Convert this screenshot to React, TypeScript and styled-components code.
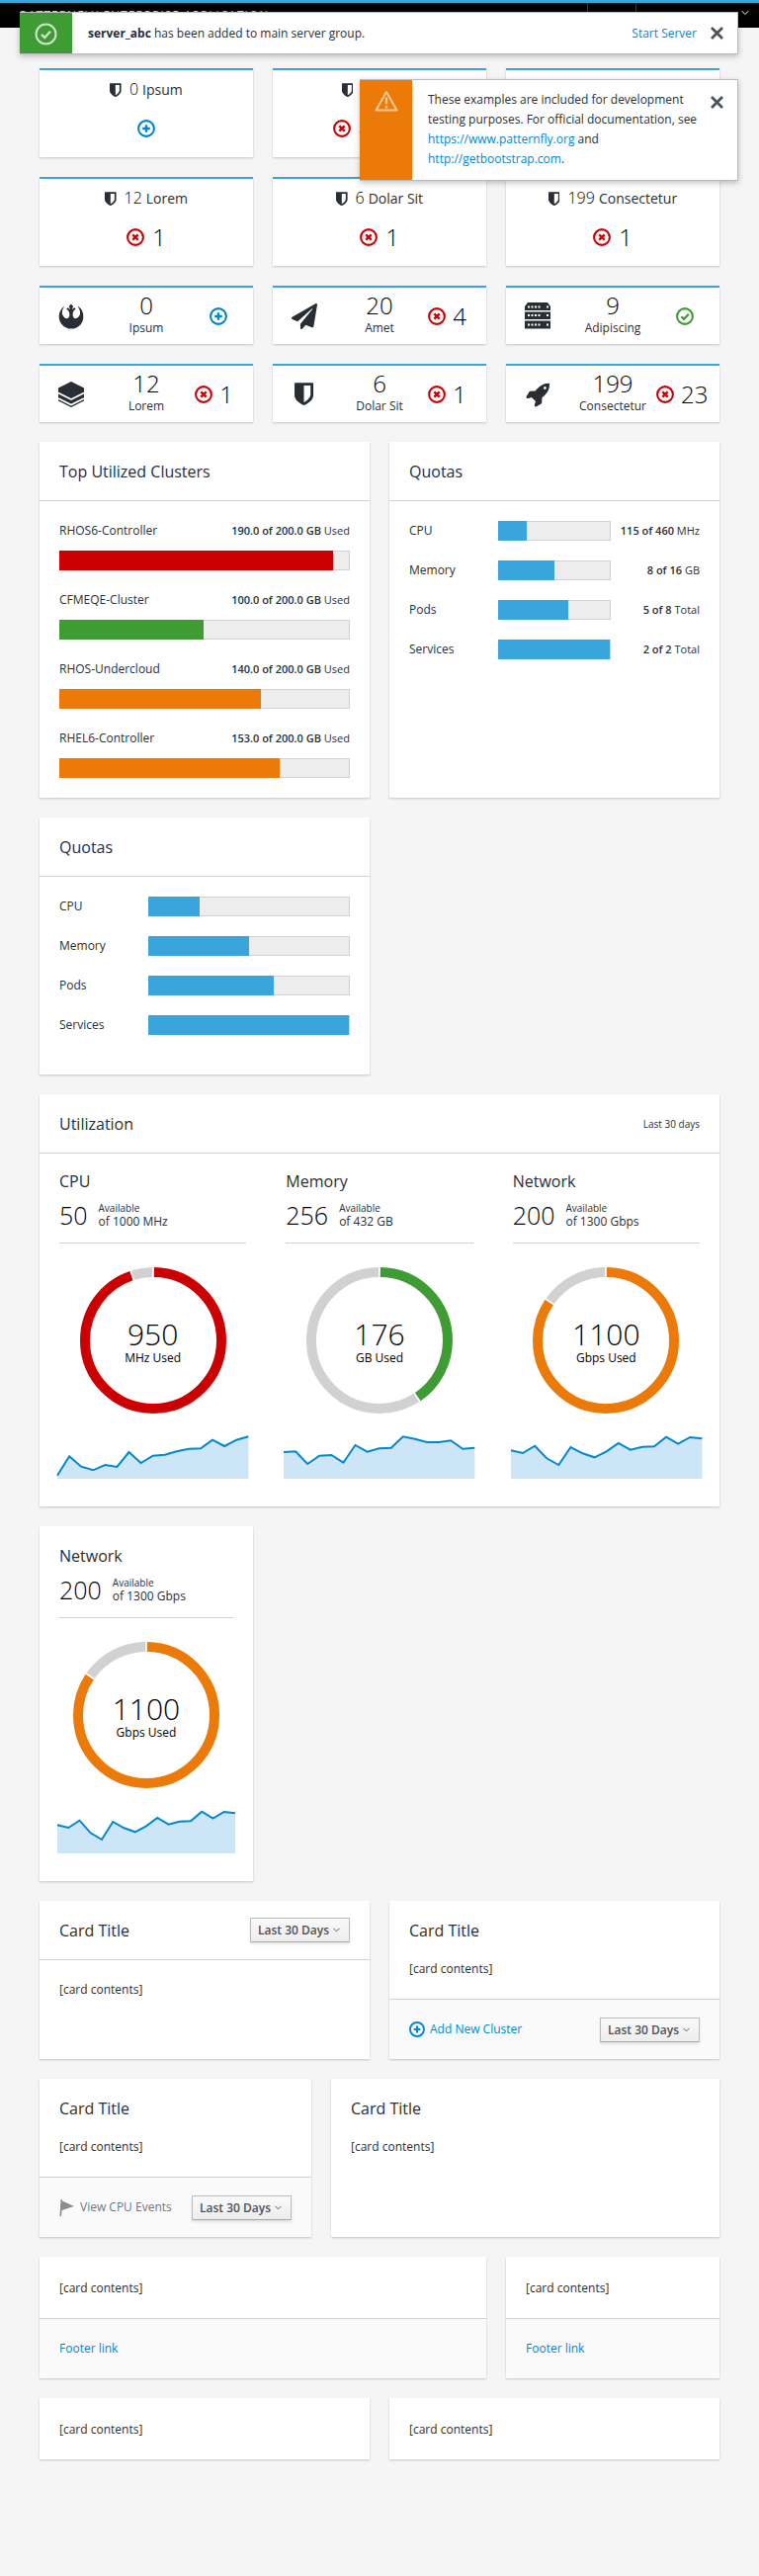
import { ReactNode } from "react";
import styled, { createGlobalStyle } from "styled-components";
import { FaPaperPlane, FaRebel } from "react-icons/fa";
import { ChevronDown } from "lucide-react";

const BLUE = "#39a5dc";
const LINK = "#0088ce";
const RED = "#cc0000";
const GREEN = "#3f9c35";
const ORANGE = "#ec7a08";
const INK = "#292e34";
const NUMBER_INK = "#030303";

const GlobalStyle = createGlobalStyle`
  html, body {
    margin: 0;
    background: #f5f5f5;
  }
  body {
    font-family: "Open Sans", "Noto Sans", sans-serif;
    font-size: 12px;
    line-height: 20px;
    color: #292e34;
  }
  * {
    box-sizing: border-box;
  }
`;

type Status = "error" | "add" | "ok";

const statusColors: Record<Status, string> = { error: RED, add: LINK, ok: GREEN };

const StatusIcon = ({ kind, size = 18 }: { kind: Status; size?: number }) => (
  <svg width={size} height={size} viewBox="0 0 18 18" fill="none" stroke={statusColors[kind]}>
    <circle cx="9" cy="9" r="7.9" strokeWidth="2.1" />
    {kind === "error" && <path d="M6.3 6.3l5.4 5.4M11.7 6.3l-5.4 5.4" strokeWidth="2.4" />}
    {kind === "add" && <path d="M9 5.2v7.6M5.2 9h7.6" strokeWidth="2.4" />}
    {kind === "ok" && <path d="M5.4 9.2l2.6 2.6 4.8-5" strokeWidth="2.3" />}
  </svg>
);

const WarnIcon = () => (
  <svg width="18" height="18" viewBox="0 0 18 18" fill="none" stroke={ORANGE} strokeWidth="2">
    <path d="M9 2l8 14.5H1z" strokeLinejoin="round" />
  </svg>
);

const ShieldIcon = ({ size }: { size: number }) => (
  <svg width={size * 0.83} height={size} viewBox="0 240 1280 1545" fill={INK} fillRule="evenodd">
    <path d="M1280 320v768q0 86-33.5 170.5t-83 150-118 127.5-126.5 103-121 77.5-89.5 42.5-40 16q-10 5-28 5t-28-5q-22-9-40-16t-89.5-42.5-121-77.5-126.5-103-118-127.5-83-150-33.5-170.5v-768q0-26 19-45t45-19h1152q26 0 45 19t19 45zM1088 1088v-640h-448v1137q119-63 213-137 235-184 235-360z" />
  </svg>
);

const RocketIcon = () => (
  <svg width="26" height="26" viewBox="0 0 1792 1792" fill={INK}>
    <path d="M1504 448q0-40-28-68t-68-28-68 28-28 68 28 68 68 28 68-28 28-68zm224-288q0 249-75.5 430.5t-253.5 360.5q-81 80-195 176l-20 379q-2 16-16 26l-384 224q-7 4-16 4-12 0-23-9l-64-64q-13-14-8-32l85-276-281-281-276 85q-3 1-9 1-14 0-23-9l-64-64q-17-19-5-39l224-384q10-14 26-16l379-20q96-114 176-195 188-187 358-258t431-71q14 0 24 9.5t10 22.5z" />
  </svg>
);

const ServerIcon = () => (
  <svg width="26" height="27" viewBox="0 0 26 27">
    <path d="M3 0h20l3 4v4H0V4z" fill={INK} />
    <rect y="9.5" width="26" height="7.5" fill={INK} />
    <rect y="18.5" width="26" height="8" fill={INK} />
    <g fill="#fff">
      <rect x="3" y="3.5" width="2" height="2" />
      <rect x="6.5" y="3.5" width="2" height="2" />
      <rect x="10" y="3.5" width="2" height="2" />
      <rect x="13.5" y="3.5" width="2" height="2" />
      <rect x="22" y="3.5" width="2" height="2" />
      <rect x="3" y="12" width="2" height="2" />
      <rect x="6.5" y="12" width="2" height="2" />
      <rect x="10" y="12" width="2" height="2" />
      <rect x="13.5" y="12" width="2" height="2" />
      <rect x="22" y="12" width="2" height="2" />
      <rect x="3" y="21.5" width="2" height="2" />
      <rect x="6.5" y="21.5" width="2" height="2" />
      <rect x="10" y="21.5" width="2" height="2" />
      <rect x="13.5" y="21.5" width="2" height="2" />
      <rect x="22" y="21.5" width="2" height="2" />
    </g>
  </svg>
);

const StackIcon = () => (
  <svg width="26" height="26" viewBox="0 0 26 26">
    <path d="M13 0l13 6.5v13L13 26 0 19.5v-13z" fill={INK} />
    <path d="M0 11.5l13 6.5 13-6.5M0 17l13 6.5L26 17" fill="none" stroke="#fff" strokeWidth="1.8" />
  </svg>
);

const FlagIcon = () => (
  <svg width="15" height="17" viewBox="0 0 15 17" fill="#8b8d8f">
    <path d="M0.5 17L1.5 0h1.4v1.5L15 7 2.6 11 2 17z" />
  </svg>
);

const CloseIcon = () => (
  <svg width="13" height="13" viewBox="0 0 13 13" fill="none" stroke="#4d5258" strokeWidth="2.8">
    <path d="M1 1l11 11M12 1L1 12" />
  </svg>
);

const Topbar = styled.header`
  height: 28px;
  background: #000;
  border-top: 3px solid ${BLUE};
  color: #d1d1d1;
  display: flex;
  justify-content: space-between;
  overflow: hidden;
`;

const Brand = styled.div`
  padding: 6px 0 0 20px;
  font-size: 12px;
  line-height: 14px;
  letter-spacing: 1px;
  white-space: nowrap;
`;

const UtilityGroup = styled.div`
  display: flex;
  color: #fff;
`;

const UtilityCell = styled.div<{ $width: number }>`
  width: ${(p) => p.$width}px;
  border-left: 1px solid #333;
  padding: 4px 8px 0 0;
  display: flex;
  justify-content: flex-end;
  align-items: flex-start;
`;

const Toast = styled.div<{ $top: number; $left: number }>`
  position: absolute;
  top: ${(p) => p.$top}px;
  left: ${(p) => p.$left}px;
  right: 21px;
  display: flex;
  background: #fff;
  border: 1px solid #bbb;
  border-left: none;
  box-shadow: 0 2px 6px rgba(3, 3, 3, 0.25);
`;

const ToastBadge = styled.div<{ $color: string }>`
  width: 53px;
  flex: none;
  background: ${(p) => p.$color};
  display: flex;
  justify-content: center;
  align-items: flex-start;
  padding-top: 10px;
`;

const ToastText = styled.div`
  flex: 1;
  padding: 10px 0 11px 16px;
  font-size: 12px;
  line-height: 20px;
  max-width: 298px;
`;

const ToastRow = styled.div`
  flex: 1;
  display: flex;
  align-items: center;
  padding-left: 16px;
  height: 41px;
  justify-content: space-between;
`;

const ToastClose = styled.div<{ $top: number; $push?: boolean }>`
  margin-left: ${(p) => (p.$push ? "auto" : "14px")};
  padding: ${(p) => p.$top}px 14px 0 0;
  height: 13px;
  line-height: 0;
  box-sizing: content-box;
`;

const TextLink = styled.a`
  color: ${LINK};
  text-decoration: none;
  cursor: pointer;
`;

const Page = styled.main`
  padding: 41px 40px 120px;
  display: grid;
  grid-template-columns: repeat(12, 1fr);
  gap: 20px;
`;

const Card = styled.section<{ $span: number; $accent?: boolean }>`
  grid-column: span ${(p) => p.$span};
  background: #fff;
  box-shadow: 0 1px 2px rgba(3, 3, 3, 0.2);
  border-top: ${(p) => (p.$accent ? `2px solid ${BLUE}` : "none")};
  display: flex;
  flex-direction: column;
  min-width: 0;
`;

const Spacer = styled.div<{ $span: number }>`
  grid-column: span ${(p) => p.$span};
`;

const AggregateTitle = styled.div`
  margin-top: 9px;
  display: flex;
  justify-content: center;
  align-items: center;
  font-size: 14px;
  line-height: 20px;
  gap: 8px;
`;

const AggregateNumber = styled.span`
  font-size: 16px;
  font-weight: 300;
  color: ${NUMBER_INK};
  margin-right: 4px;
`;

const AggregateStatus = styled.div`
  margin: 15px 0;
  height: 28px;
  display: flex;
  justify-content: center;
  align-items: center;
  gap: 8px;
`;

const SecondStatus = styled.span`
  margin-left: 6px;
  display: flex;
  align-items: center;
  gap: 8px;
`;

const Count = styled.span`
  font-size: 24px;
  font-weight: 300;
  line-height: 28px;
  color: ${NUMBER_INK};
`;

const MiniBody = styled.div`
  display: grid;
  grid-template-columns: 64px 88px 1fr;
  height: 57px;
  align-items: center;
`;

const MiniIcon = styled.div`
  display: flex;
  justify-content: center;
  color: ${INK};
`;

const MiniCenter = styled.div`
  text-align: center;
  padding-top: 5px;
  height: 100%;
  white-space: nowrap;
`;

const MiniNumber = styled.div`
  font-size: 24px;
  font-weight: 300;
  line-height: 26px;
  color: ${NUMBER_INK};
`;

const MiniLabel = styled.div`
  font-size: 12px;
  line-height: 20px;
`;

const MiniStatus = styled.div<{ $solo: boolean }>`
  display: flex;
  justify-content: flex-end;
  align-items: center;
  gap: 7px;
  padding-right: ${(p) => (p.$solo ? 26 : 20)}px;
  white-space: nowrap;
`;

const CardHeader = styled.div`
  height: 60px;
  padding: 0 20px;
  border-bottom: 1px solid #d1d1d1;
  display: flex;
  justify-content: space-between;
  align-items: center;
`;

const CardTitle = styled.h2`
  margin: 0;
  font-size: 16px;
  font-weight: 400;
  line-height: 20px;
  color: #292e34;
`;

const CardBody = styled.div<{ $pad?: string }>`
  flex: 1;
  padding: ${(p) => p.$pad ?? "20px"};
`;

const BareTitle = styled(CardTitle)`
  margin-bottom: 19px;
`;

const CardFooter = styled.div`
  height: 61px;
  border-top: 1px solid #d1d1d1;
  background: #fafafa;
  padding: 0 20px;
  display: flex;
  justify-content: space-between;
  align-items: center;
`;

const ClusterRow = styled.div`
  margin-bottom: 20px;
  &:last-child {
    margin-bottom: 0;
  }
`;

const ClusterHead = styled.div`
  display: flex;
  justify-content: space-between;
  margin-bottom: 10px;
`;

const SmallNote = styled.span`
  font-size: 11px;
  white-space: nowrap;
  strong {
    font-weight: 600;
  }
`;

const Track = styled.div`
  height: 20px;
  background: #ededed;
  border: 1px solid #d1d1d1;
  position: relative;
`;

const Fill = styled.div<{ $color: string }>`
  position: absolute;
  top: -1px;
  bottom: -1px;
  left: -1px;
  background: ${(p) => p.$color};
`;

const QuotaRow = styled.div<{ $note: boolean }>`
  display: grid;
  grid-template-columns: ${(p) => (p.$note ? "90px 1fr 90px" : "90px 1fr")};
  align-items: center;
  margin-bottom: 20px;
`;

const QuotaNote = styled(SmallNote)`
  text-align: right;
`;

const UtilGrid = styled.div`
  display: grid;
  grid-template-columns: repeat(3, 1fr);
  gap: 40px;
  padding: 17px 20px 28px;
`;

const MeterColumn = styled.div<{ $top?: number; $inset?: number }>`
  min-width: 0;
  padding: ${(p) => (p.$top ? `${p.$top}px ${p.$inset}px 28px` : "0")};
`;

const MeterName = styled.div`
  font-size: 16px;
  line-height: 22px;
`;

const MeterStat = styled.div`
  margin-top: 5px;
  height: 36px;
  display: flex;
  align-items: center;
  gap: 11px;
  padding-bottom: 10px;
  box-sizing: content-box;
  border-bottom: 1px solid #d1d1d1;
`;

const MeterBig = styled.span`
  font-size: 25px;
  font-weight: 300;
  color: ${NUMBER_INK};
`;

const MeterText = styled.div`
  font-size: 12px;
  line-height: 13px;
  white-space: nowrap;
`;

const MeterTextSmall = styled.div`
  font-size: 10px;
`;

const DonutBox = styled.div`
  position: relative;
  width: 148px;
  height: 148px;
  margin: 24px auto 22px;
`;

const DonutLabel = styled.div`
  position: absolute;
  inset: 0;
  display: flex;
  flex-direction: column;
  align-items: center;
  justify-content: center;
  color: #000;
  padding-top: 2px;
`;

const DonutNumber = styled.div`
  font-size: 30px;
  font-weight: 300;
  line-height: 34px;
`;

const DonutUnit = styled.div`
  font-size: 12px;
  line-height: 14px;
`;

const SparkSvg = styled.svg`
  display: block;
  width: calc(100% + 4px);
  height: 44px;
  margin-left: -2px;
  overflow: visible;
`;

const DropButton = styled.button`
  width: 101px;
  height: 25px;
  padding: 0 7px;
  display: flex;
  justify-content: space-between;
  align-items: center;
  font-family: inherit;
  font-size: 12px;
  font-weight: 600;
  color: #4d5258;
  background: linear-gradient(#fafafa, #ededed);
  border: 1px solid #bbb;
  border-bottom-color: #a8a8a8;
  border-radius: 1px;
  box-shadow: 0 2px 3px rgba(3, 3, 3, 0.1);
`;

const FooterAction = styled.span<{ $muted?: boolean }>`
  display: flex;
  align-items: center;
  gap: ${(p) => (p.$muted ? 6 : 5)}px;
  color: ${(p) => (p.$muted ? "#72767b" : LINK)};
`;

const Donut = ({ percent, color, value, unit }: { percent: number; color: string; value: number; unit: string }) => (
  <DonutBox>
    <svg width="148" height="148" viewBox="0 0 148 148" fill="none" strokeWidth="10" transform="rotate(-90)">
      <circle
        cx="74"
        cy="74"
        r="69"
        pathLength={100}
        stroke="#d1d1d1"
        strokeDasharray={`${100 - percent - 0.4} ${percent + 0.4}`}
        strokeDashoffset={-percent - 0.2}
      />
      <circle
        cx="74"
        cy="74"
        r="69"
        pathLength={100}
        stroke={color}
        strokeDasharray={`${percent - 0.4} ${100 - percent + 0.4}`}
        strokeDashoffset={-0.2}
      />
    </svg>
    <DonutLabel>
      <DonutNumber>{value}</DonutNumber>
      <DonutUnit>{unit}</DonutUnit>
    </DonutLabel>
  </DonutBox>
);

const Spark = ({ data }: { data: number[] }) => {
  const line = data.map((h, i) => `${i},${44 - h}`).join(" ");
  return (
    <SparkSvg viewBox="0 0 16 44" preserveAspectRatio="none">
      <polygon points={`0,44 ${line} 16,44`} fill="#cce6f7" />
      <polyline points={line} fill="none" stroke={LINK} strokeWidth="2" vectorEffect="non-scaling-stroke" />
    </SparkSvg>
  );
};

const Dropdown = () => (
  <DropButton>
    Last 30 Days
    <ChevronDown size={11} strokeWidth={2} />
  </DropButton>
);

const clusters = [
  { name: "RHOS6-Controller", used: 190, color: RED },
  { name: "CFMEQE-Cluster", used: 100, color: GREEN },
  { name: "RHOS-Undercloud", used: 140, color: ORANGE },
  { name: "RHEL6-Controller", used: 153, color: ORANGE },
];

const quotas = [
  { name: "CPU", percent: 25, strong: "115 of 460", unit: "MHz" },
  { name: "Memory", percent: 50, strong: "8 of 16", unit: "GB" },
  { name: "Pods", percent: 62.5, strong: "5 of 8", unit: "Total" },
  { name: "Services", percent: 100, strong: "2 of 2", unit: "Total" },
];

const SPARK_CPU = [3.3, 22.7, 12.3, 8.7, 14, 12, 27, 16, 23.3, 24.3, 27.7, 30.3, 30.7, 39.3, 33, 39.3, 42.7];
const SPARK_MEM = [27, 27.7, 15, 23.3, 24, 16.3, 34, 27.3, 30.7, 31.3, 42.7, 40.3, 37, 37, 38.7, 30.3, 31.3];
const SPARK_NET = [28.7, 26, 33.3, 20.7, 14, 32, 25.7, 21.7, 27.7, 36, 29.3, 32.3, 32.7, 42.3, 35.3, 42, 40.7];

const meters = [
  { name: "CPU", free: 50, total: "of 1000 MHz", percent: 95, color: RED, value: 950, unit: "MHz Used", spark: SPARK_CPU },
  { name: "Memory", free: 256, total: "of 432 GB", percent: 40.7, color: GREEN, value: 176, unit: "GB Used", spark: SPARK_MEM },
  { name: "Network", free: 200, total: "of 1300 Gbps", percent: 84.6, color: ORANGE, value: 1100, unit: "Gbps Used", spark: SPARK_NET },
];

const network = meters[2];

const aggregates: { num: number; label: string; kind: Status; count?: number; warn?: number }[] = [
  { num: 0, label: "Ipsum", kind: "add" },
  { num: 20, label: "Amet", kind: "error", count: 4, warn: 1 },
  { num: 9, label: "Adipiscing", kind: "ok" },
  { num: 12, label: "Lorem", kind: "error", count: 1 },
  { num: 6, label: "Dolar Sit", kind: "error", count: 1 },
  { num: 199, label: "Consectetur", kind: "error", count: 1 },
];

const miniIcons: ReactNode[] = [
  <FaRebel size={26} />,
  <FaPaperPlane size={26} />,
  <ServerIcon />,
  <StackIcon />,
  <ShieldIcon size={23} />,
  <RocketIcon />,
];

const minis: { num: number; label: string; kind: Status; count?: number }[] = [
  { num: 0, label: "Ipsum", kind: "add" },
  { num: 20, label: "Amet", kind: "error", count: 4 },
  { num: 9, label: "Adipiscing", kind: "ok" },
  { num: 12, label: "Lorem", kind: "error", count: 1 },
  { num: 6, label: "Dolar Sit", kind: "error", count: 1 },
  { num: 199, label: "Consectetur", kind: "error", count: 23 },
];

const Meter = ({ m, top, inset }: { m: (typeof meters)[number]; top?: number; inset?: number }) => (
  <MeterColumn $top={top} $inset={inset}>
    <MeterName>{m.name}</MeterName>
    <MeterStat>
      <MeterBig>{m.free}</MeterBig>
      <MeterText>
        <MeterTextSmall>Available</MeterTextSmall>
        {m.total}
      </MeterText>
    </MeterStat>
    <Donut percent={m.percent} color={m.color} value={m.value} unit={m.unit} />
    <Spark data={m.spark} />
  </MeterColumn>
);

export default function App() {
  return (
    <>
      <GlobalStyle />
      <Topbar>
        <Brand>PATTERNFLY ENTERPRISE APPLICATION</Brand>
        <UtilityGroup>
          <UtilityCell $width={49} />
          <UtilityCell $width={125}>
            <ChevronDown size={12} strokeWidth={2} />
          </UtilityCell>
        </UtilityGroup>
      </Topbar>

      <Toast $top={12} $left={20}>
        <ToastBadge $color={GREEN}>
          <svg width="23" height="23" viewBox="0 0 23 23" fill="none" stroke="#fff" strokeOpacity="0.75">
            <circle cx="11.5" cy="11.5" r="10" strokeWidth="2" />
            <path d="M7 11.8l3.2 3.2 5.8-6.2" strokeWidth="2.4" />
          </svg>
        </ToastBadge>
        <ToastRow>
          <span>
            <strong>server_abc</strong> has been added to main server group.
          </span>
          <span>
            <TextLink>Start Server</TextLink>
          </span>
        </ToastRow>
        <ToastClose $top={14}>
          <CloseIcon />
        </ToastClose>
      </Toast>

      <Toast $top={80} $left={364}>
        <ToastBadge $color={ORANGE}>
          <svg width="24" height="22" viewBox="0 0 24 22" fill="none" stroke="#fff" strokeOpacity="0.6">
            <path d="M12 2L22.5 20.5H1.5z" strokeWidth="2" strokeLinejoin="round" />
            <path d="M12 7.5v7M12 16v2.5" strokeWidth="2.4" />
          </svg>
        </ToastBadge>
        <ToastText>
          These examples are included for development testing purposes. For official documentation, see{" "}
          <TextLink>https://www.patternfly.org</TextLink> and <TextLink>http://getbootstrap.com</TextLink>.
        </ToastText>
        <ToastClose $top={16} $push>
          <CloseIcon />
        </ToastClose>
      </Toast>

      <Page>
        {aggregates.map((a) => (
          <Card key={a.label} $span={4} $accent>
            <AggregateTitle>
              <ShieldIcon size={14} />
              <span>
                <AggregateNumber>{a.num}</AggregateNumber>
                {a.label}
              </span>
            </AggregateTitle>
            <AggregateStatus>
              <StatusIcon kind={a.kind} />
              {a.count !== undefined && <Count>{a.count}</Count>}
              {a.warn !== undefined && (
                <SecondStatus>
                  <WarnIcon />
                  <Count>{a.warn}</Count>
                </SecondStatus>
              )}
            </AggregateStatus>
          </Card>
        ))}

        {minis.map((a, i) => (
          <Card key={a.label} $span={4} $accent>
            <MiniBody>
              <MiniIcon>{miniIcons[i]}</MiniIcon>
              <MiniCenter>
                <MiniNumber>{a.num}</MiniNumber>
                <MiniLabel>{a.label}</MiniLabel>
              </MiniCenter>
              <MiniStatus $solo={a.count === undefined}>
                <StatusIcon kind={a.kind} />
                {a.count !== undefined && <Count>{a.count}</Count>}
              </MiniStatus>
            </MiniBody>
          </Card>
        ))}

        <Card $span={6}>
          <CardHeader>
            <CardTitle>Top Utilized Clusters</CardTitle>
          </CardHeader>
          <CardBody>
            {clusters.map((c) => (
              <ClusterRow key={c.name}>
                <ClusterHead>
                  <span>{c.name}</span>
                  <SmallNote>
                    <strong>{c.used.toFixed(1)} of 200.0 GB</strong> Used
                  </SmallNote>
                </ClusterHead>
                <Track>
                  <Fill $color={c.color} style={{ width: `${(c.used / 200) * 100}%` }} />
                </Track>
              </ClusterRow>
            ))}
          </CardBody>
        </Card>

        <Card $span={6}>
          <CardHeader>
            <CardTitle>Quotas</CardTitle>
          </CardHeader>
          <CardBody>
            {quotas.map((q) => (
              <QuotaRow key={q.name} $note>
                <span>{q.name}</span>
                <Track>
                  <Fill $color={BLUE} style={{ width: `calc(${q.percent}% + 1px)` }} />
                </Track>
                <QuotaNote>
                  <strong>{q.strong}</strong> {q.unit}
                </QuotaNote>
              </QuotaRow>
            ))}
          </CardBody>
        </Card>

        <Card $span={6}>
          <CardHeader>
            <CardTitle>Quotas</CardTitle>
          </CardHeader>
          <CardBody>
            {quotas.map((q) => (
              <QuotaRow key={q.name} $note={false}>
                <span>{q.name}</span>
                <Track>
                  <Fill $color={BLUE} style={{ width: `calc(${q.percent}% + 1px)` }} />
                </Track>
              </QuotaRow>
            ))}
          </CardBody>
        </Card>
        <Spacer $span={6} />

        <Card $span={12}>
          <CardHeader>
            <CardTitle>Utilization</CardTitle>
            <MeterTextSmall>Last 30 days</MeterTextSmall>
          </CardHeader>
          <UtilGrid>
            {meters.map((m) => (
              <Meter key={m.name} m={m} />
            ))}
          </UtilGrid>
        </Card>

        <Card $span={4}>
          <Meter m={network} top={19} inset={20} />
        </Card>
        <Spacer $span={8} />

        <Card $span={6}>
          <CardHeader>
            <CardTitle>Card Title</CardTitle>
            <Dropdown />
          </CardHeader>
          <CardBody>[card contents]</CardBody>
        </Card>
        <Card $span={6}>
          <CardBody>
            <BareTitle>Card Title</BareTitle>
            [card contents]
          </CardBody>
          <CardFooter>
            <FooterAction>
              <StatusIcon kind="add" size={16} />
              Add New Cluster
            </FooterAction>
            <Dropdown />
          </CardFooter>
        </Card>

        <Card $span={5}>
          <CardBody>
            <BareTitle>Card Title</BareTitle>
            [card contents]
          </CardBody>
          <CardFooter>
            <FooterAction $muted>
              <FlagIcon />
              View CPU Events
            </FooterAction>
            <Dropdown />
          </CardFooter>
        </Card>
        <Card $span={7}>
          <CardBody>
            <BareTitle>Card Title</BareTitle>
            [card contents]
          </CardBody>
        </Card>

        <Card $span={8}>
          <CardBody $pad="22px 20px 20px">[card contents]</CardBody>
          <CardFooter>
            <TextLink>Footer link</TextLink>
          </CardFooter>
        </Card>
        <Card $span={4}>
          <CardBody $pad="22px 20px 20px">[card contents]</CardBody>
          <CardFooter>
            <TextLink>Footer link</TextLink>
          </CardFooter>
        </Card>

        <Card $span={6}>
          <CardBody $pad="22px 20px 20px">[card contents]</CardBody>
        </Card>
        <Card $span={6}>
          <CardBody $pad="22px 20px 20px">[card contents]</CardBody>
        </Card>
      </Page>
    </>
  );
}
